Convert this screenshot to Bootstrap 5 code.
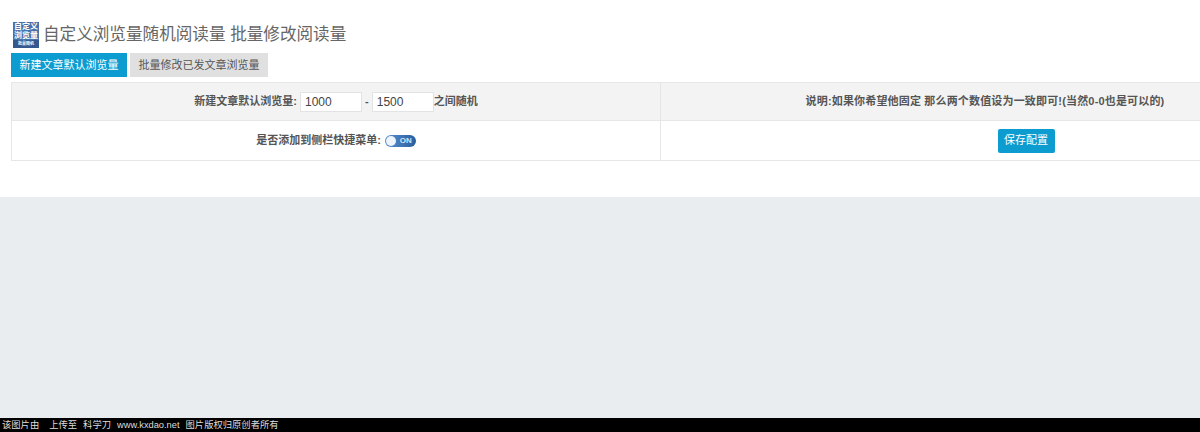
<!DOCTYPE html>
<html lang="zh">
<head>
<meta charset="utf-8">
<title>自定义浏览量随机阅读量</title>
<link rel="stylesheet" href="https://cdn.jsdelivr.net/npm/bootstrap@5.3.0/dist/css/bootstrap.min.css">
<style>
html,body{height:432px;overflow:hidden;}
body{background:#e9edf0;font-family:"Liberation Sans","Noto Sans CJK SC",sans-serif;color:#555;font-size:12px;}
.sheet{height:418px;display:flex;flex-direction:column;}
.panel{background:#fff;height:197px;padding:22px 0 0 11px;overflow:hidden;}
.head-row{height:26px;padding-left:2px;gap:4px;}
.logo-box{width:26px;height:26px;background:#4a72a8;color:#fff;font-weight:700;line-height:1;text-align:center;flex:none;overflow:hidden;display:flex;flex-direction:column;align-items:center;}
.logo-box span{display:block;font-size:8px;height:9px;line-height:9px;white-space:nowrap;}
.logo-box .tiny{font-size:4px;height:8px;line-height:8px;background:#34588f;width:100%;}
.head-title{font-size:16.6px;color:#666;margin:0;font-weight:400;line-height:24px;}
.tab-row{margin-top:5px;gap:3px;}
.tab-pill{font-size:11px;height:24px;line-height:24px;padding:0 8.5px;border-radius:0;border:0;}
.tab-on{background:#0d9ccf;color:#fff;}
.tab-off{background:#e0e0e0;color:#555;}
.conf-table{width:1299px;margin:5px 0 0;table-layout:fixed;border-collapse:collapse;}
.conf-table td{border:1px solid #e6e6e6;text-align:center;vertical-align:middle;padding:0;font-weight:700;font-size:11px;color:#555;background:#fff;}
.conf-table tr.shade td{background:#f3f3f3;height:38px;}
.conf-table tr.plain td{height:40px;}
.note-text{letter-spacing:.17px;}
.num-in{width:62px;height:20px;border:1px solid #e3e3e3;background:#fff;font:400 12px "Liberation Sans",sans-serif;color:#444;padding:0 4px;vertical-align:middle;margin:0;}
.switch-pill{display:inline-block;width:31px;height:12px;border-radius:6px;background:linear-gradient(90deg,#5a8fd0,#2a5f9f);position:relative;vertical-align:middle;color:#cfe3f7;font-size:8px;line-height:12px;text-align:right;padding-right:4px;font-weight:700;margin:-1px 0 0 1px;}
.switch-knob{position:absolute;left:1px;top:1px;width:10px;height:10px;border-radius:50%;background:#eef4fb;}
.save-btn{background:#0d9ccf;color:#fff;border:0;border-radius:2px;font-size:11px;font-weight:400;height:24px;width:57px;padding:0;margin-left:82px;}
.gap-fill{flex:1;}
.foot-bar{background:#000;color:#ddd;height:14px;line-height:14px;font-size:9.3px;padding-left:2px;white-space:nowrap;}
.foot-bar span{margin-right:6px;}
.foot-bar .first-bit{margin-right:10px;}
</style>
</head>
<body>
<div class="sheet">
  <div class="panel">
    <div class="d-flex align-items-center head-row">
      <div class="logo-box"><span>自定义</span><span>浏览量</span><span class="tiny">批量随机</span></div>
      <h1 class="head-title">自定义浏览量随机阅读量 批量修改阅读量</h1>
    </div>
    <div class="d-flex tab-row">
      <button class="btn tab-pill tab-on">新建文章默认浏览量</button>
      <button class="btn tab-pill tab-off">批量修改已发文章浏览量</button>
    </div>
    <table class="conf-table">
      <tr class="shade">
        <td>新建文章默认浏览量: <input class="num-in" value="1000"> - <input class="num-in" value="1500">之间随机</td>
        <td><span class="note-text">说明:如果你希望他固定 那么两个数值设为一致即可!(当然0-0也是可以的)</span></td>
      </tr>
      <tr class="plain">
        <td>是否添加到侧栏快捷菜单: <span class="switch-pill"><span class="switch-knob"></span>ON</span></td>
        <td><button class="btn save-btn">保存配置</button></td>
      </tr>
    </table>
  </div>
  <div class="gap-fill"></div>
</div>
<div class="foot-bar"><span class="first-bit">该图片由</span><span>上传至</span><span>科学刀</span><span>www.kxdao.net</span>图片版权归原创者所有</div>
<script src="https://cdn.jsdelivr.net/npm/bootstrap@5.3.0/dist/js/bootstrap.bundle.min.js"></script>
</body>
</html>
